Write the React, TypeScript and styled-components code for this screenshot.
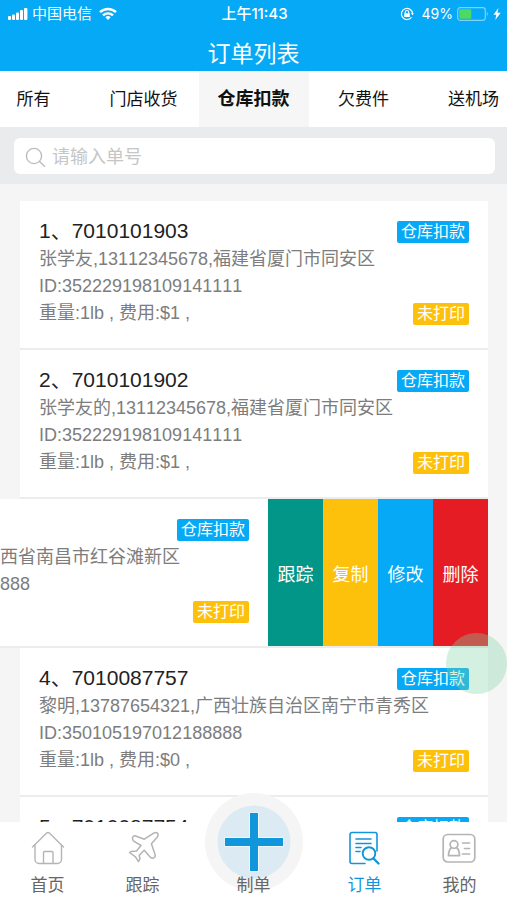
import React from "react";
import styled, { createGlobalStyle } from "styled-components";

const GlobalStyle = createGlobalStyle`
  *, *::before, *::after { box-sizing: border-box; }
  body {
    margin: 0;
    background: #f5f5f5;
    font-family: "Liberation Sans", "Noto Sans CJK SC", sans-serif;
    font-kerning: none;
  }
  button, input { font-family: inherit; }
  button { border: 0; padding: 0; background: none; cursor: pointer; }
`;

const Screen = styled.div`
  display: flex;
  flex-direction: column;
  height: 100vh;
  overflow: hidden;
`;

const Header = styled.header`
  flex: none;
  background: #05a9f5;
  color: #fff;
`;

const StatusBar = styled.div`
  display: grid;
  grid-template-columns: 1fr auto 1fr;
  align-items: center;
  height: 27px;
  padding: 0 6px 0 8px;
  font-family: Inter, "Noto Sans CJK SC", sans-serif;
  font-size: 14px;
`;

const StatusGroup = styled.div<{ $end?: boolean }>`
  display: flex;
  align-items: center;
  justify-content: ${(p) => (p.$end ? "flex-end" : "flex-start")};
  gap: 4px;
`;

const Carrier = styled.span`
  margin-right: 3px;
  font-size: 15px;
  line-height: 20px;
`;

const Percent = styled.span`
  margin-left: 4px;
`;

const Clock = styled.time`
  font-weight: 500;
  font-size: 15px;
  line-height: 20px;
`;

const Title = styled.h1`
  margin: 0;
  padding: 10px 0 0;
  font-size: 23px;
  line-height: 34px;
  font-weight: 400;
  text-align: center;
`;

const Tabs = styled.nav`
  flex: none;
  display: flex;
  justify-content: center;
  height: 56px;
  background: #fff;
  overflow: hidden;
`;

const Tab = styled.button<{ $active?: boolean }>`
  flex: none;
  width: 110px;
  padding-bottom: 4px;
  color: #111;
  background: ${(p) => (p.$active ? "#f6f6f6" : "#fff")};
  font-size: ${(p) => (p.$active ? 18 : 17)}px;
  font-weight: ${(p) => (p.$active ? 700 : 400)};
`;

const SearchArea = styled.div`
  flex: none;
  padding: 11px 12px 10px 14px;
  background: #eaebed;
`;

const SearchBox = styled.label`
  display: flex;
  align-items: center;
  gap: 6px;
  height: 36px;
  padding: 2px 11px 0;
  border-radius: 6px;
  background: #fff;
`;

const SearchInput = styled.input`
  flex: 1;
  min-width: 0;
  padding: 0;
  border: 0;
  outline: 0;
  background: transparent;
  font-size: 18px;
  &::placeholder { color: #c6c6c6; opacity: 1; }
`;

const List = styled.ul`
  flex: 1;
  min-height: 0;
  margin: 0;
  padding: 17px 19px 0 20px;
  list-style: none;
  overflow: hidden;
`;

const Row = styled.li<{ $swiped?: boolean }>`
  display: flex;
  height: 149px;
  margin-left: ${(p) => (p.$swiped ? -20 : 0)}px;
  background: #fff;
  border-bottom: 2px solid #ececec;
`;

const Order = styled.article<{ $swiped?: boolean }>`
  flex: 1;
  min-width: 0;
  display: grid;
  grid-template-columns: 1fr auto;
  grid-template-rows: 28px 27px 27px 27px;
  padding: 17px 19px 0 ${(p) => (p.$swiped ? 0 : 19)}px;
  color: #7d7d7d;
  font-size: 18px;
  white-space: nowrap;
  overflow: hidden;
`;

const Number = styled.h2`
  margin: 0;
  color: #222;
  font-size: 21px;
  line-height: 25px;
  font-weight: 400;
`;

const Line = styled.p<{ $wide?: boolean }>`
  margin: 0;
  grid-column: ${(p) => (p.$wide ? "1 / -1" : "1")};
  line-height: 27px;
`;

const Badge = styled.span<{ $tone: string }>`
  grid-column: 2;
  justify-self: end;
  align-self: center;
  height: 22px;
  padding: 0 4px;
  border-radius: 2px;
  background: ${(p) => p.$tone};
  color: #fff;
  font-size: 16px;
  line-height: 22px;
`;

const Actions = styled.div`
  flex: none;
  display: flex;
`;

const Action = styled.button<{ $tone: string }>`
  width: 55px;
  background: ${(p) => p.$tone};
  color: #fff;
  font-size: 18px;
`;

const TouchDot = styled.div`
  position: fixed;
  right: 0;
  bottom: 206px;
  width: 61px;
  height: 61px;
  border-radius: 50%;
  background: rgba(129, 211, 167, 0.35);
  pointer-events: none;
`;

const BottomBar = styled.nav`
  flex: none;
  display: grid;
  grid-template-columns: 3fr 3fr 4fr 3fr 3fr;
  height: 78px;
  background: #fff;
`;

const BarLink = styled.a<{ $active?: boolean }>`
  position: relative;
  display: flex;
  flex-direction: column;
  align-items: center;
  justify-content: flex-end;
  gap: 8px;
  padding-bottom: 1px;
  color: ${(p) => (p.$active ? "#1296db" : "#666")};
  font-size: 17px;
  line-height: 26px;
  text-decoration: none;
`;

const BarLabel = styled.span`
  position: relative;
`;

const CreateIcon = styled.svg`
  position: absolute;
  top: -29px;
  left: 50%;
  margin-left: -49px;
`;

const blue = "#05a9f5";
const amber = "#fec10b";

const SignalIcon = () => (
  <svg width="20" height="14" viewBox="0 0 20 14" fill="#fff" aria-hidden="true">
    <rect x="0" y="9" width="3" height="4" rx="1" />
    <rect x="4" y="7.5" width="3" height="5.5" rx="1" />
    <rect x="8" y="5.5" width="3" height="7.5" rx="1" />
    <rect x="12" y="3" width="3" height="10" rx="1" />
    <rect x="16" y="1" width="3.4" height="12" rx="1" />
  </svg>
);

const WifiIcon = () => (
  <svg width="18" height="14" viewBox="0 0 18 14" fill="none" stroke="#fff" strokeWidth="2.4" aria-hidden="true">
    <path d="M1 5.2a11.5 11.5 0 0 1 16 0" />
    <path d="M4 8.4a7.2 7.2 0 0 1 10 0" />
    <path d="M9 13 6.3 10.3a3.9 3.9 0 0 1 5.4 0z" fill="#fff" stroke="none" />
  </svg>
);

const LockIcon = () => (
  <svg width="14" height="14" viewBox="0 0 14 14" fill="none" stroke="#fff" strokeWidth="1.2" aria-hidden="true">
    <path d="M11.5 10.3A5.6 5.6 0 1 1 12.6 6.5" />
    <path d="m10.8 6.2 1.8 2 1.3-2z" fill="#fff" stroke="none" />
    <rect x="4.2" y="6.2" width="5.6" height="3.9" rx=".5" fill="#fff" stroke="none" />
    <path d="M5.3 6.5V5.2a1.7 1.7 0 0 1 3.4 0v1.3" />
  </svg>
);

const BatteryIcon = () => (
  <svg width="32" height="14" viewBox="0 0 32 14" aria-hidden="true">
    <rect x=".7" y=".7" width="27.6" height="12.6" rx="2.5" fill="none" stroke="#7fd2fa" strokeWidth="1.2" />
    <rect x="2.3" y="2.3" width="12" height="9.4" rx="1" fill="#4cd964" />
    <path d="M29.8 4.8q2 2.2 0 4.4z" fill="#7fd2fa" />
  </svg>
);

const BoltIcon = () => (
  <svg width="8" height="12" viewBox="0 0 8 12" fill="#fff" aria-hidden="true">
    <path d="M5.4 0 .5 6.7h2.8L2.3 12 7.7 4.8H4.5z" />
  </svg>
);

const SearchIcon = () => (
  <svg width="21" height="20" viewBox="0 0 21 20" fill="none" stroke="#bcbcbc" strokeWidth="1.4" strokeLinecap="round" aria-hidden="true">
    <circle cx="9" cy="9" r="7.6" />
    <path d="m14.5 14.5 5 4.7" />
  </svg>
);

const HomeIcon = () => (
  <svg width="34" height="34" viewBox="0 0 34 34" fill="none" stroke="#b5b5b5" strokeWidth="1.4" strokeLinejoin="round" strokeLinecap="round" aria-hidden="true">
    <path d="M1.5 16 15.4 2.2q1.6-1.4 3.2 0L32.5 16" />
    <path d="M4 14v14.5a4 4 0 0 0 4 4h18.5a4 4 0 0 0 4-4V14" />
    <path d="M12.5 32.5V21.5a1 1 0 0 1 1-1h7.5a1 1 0 0 1 1 1v11" />
  </svg>
);

const PlaneIcon = () => (
  <svg width="32" height="34" viewBox="0 0 32 34" fill="none" stroke="#b3b3b3" strokeWidth="1.5" strokeLinejoin="round" aria-hidden="true">
    <path d="M8 4.8 17.3 8.2 26.3 2.3Q29 .8 30.6 2.2Q31.7 3.800 30.2 6.2L24.4 12.7 28.3 24.2Q28.5 26.3 26.5 27Q24.2 27.6 22.9 25.8L17.2 19.2 12.2 24.2 12.9 28 11.5 30.6 8.5 25.8 2.5 21.5 4 20.5 9.5 20 14 14.5 7 10.3Q5 8.7 5.7 6.3Q6.5 4.5 8 4.8Z" />
  </svg>
);

const OrderIcon = () => (
  <svg width="32" height="34" viewBox="0 0 32 34" fill="none" stroke="#1296db" strokeWidth="1.6" strokeLinecap="round" aria-hidden="true">
    <path d="M17 32.5H4a2 2 0 0 1-2-2V3.5a2 2 0 0 1 2-2h23a2 2 0 0 1 2 2V20" strokeLinejoin="round" />
    <path d="M8 8h15M8 12.5h15M8 16.5h5M8 20.5h4" />
    <circle cx="21" cy="22.5" r="6.3" strokeWidth="1.9" />
    <path d="m25.5 27.5 5 5" strokeWidth="2.4" />
  </svg>
);

const ProfileIcon = () => (
  <svg width="34" height="34" viewBox="0 0 34 34" fill="none" stroke="#b5b5b5" strokeWidth="1.7" strokeLinecap="round" strokeLinejoin="round" aria-hidden="true">
    <rect x="1.2" y="3.5" width="31.6" height="27.5" rx="4.5" />
    <circle cx="12" cy="13.5" r="3.9" />
    <path d="M9.5 16.5Q6.5 19 6.5 24.7H17.5Q17.5 19 14.5 16.5" />
    <path d="M20.5 12h7M22.5 17.5h5M20.5 23h7" />
  </svg>
);

const Warehouse = () => <Badge $tone={blue}>仓库扣款</Badge>;
const Unprinted = () => <Badge $tone={amber}>未打印</Badge>;

type OrderData = { title: string; contact?: string; id?: string; fee?: string };

const OrderRow = ({ title, contact, id, fee }: OrderData) => (
  <Row>
    <Order>
      <Number>{title}</Number>
      <Warehouse />
      <Line $wide>{contact}</Line>
      <Line $wide>{id}</Line>
      <Line>{fee}</Line>
      {fee && <Unprinted />}
    </Order>
  </Row>
);

const firstOrders: OrderData[] = [
  { title: "1、7010101903", contact: "张学友,13112345678,福建省厦门市同安区", id: "ID:352229198109141111", fee: "重量:1lb , 费用:$1 ," },
  { title: "2、7010101902", contact: "张学友的,13112345678,福建省厦门市同安区", id: "ID:352229198109141111", fee: "重量:1lb , 费用:$1 ," },
];

const lastOrders: OrderData[] = [
  { title: "4、7010087757", contact: "黎明,13787654321,广西壮族自治区南宁市青秀区", id: "ID:350105197012188888", fee: "重量:1lb , 费用:$0 ," },
  { title: "5、7010087754" },
];

const actions = [
  { label: "跟踪", tone: "#029688" },
  { label: "复制", tone: amber },
  { label: "修改", tone: blue },
  { label: "删除", tone: "#e51c23" },
];

const tabs = ["所有", "门店收货", "仓库扣款", "欠费件", "送机场"];

export default function App() {
  return (
    <Screen>
      <GlobalStyle />
      <Header>
        <StatusBar>
          <StatusGroup>
            <SignalIcon />
            <Carrier>中国电信</Carrier>
            <WifiIcon />
          </StatusGroup>
          <Clock>上午11:43</Clock>
          <StatusGroup $end>
            <LockIcon />
            <Percent>49%</Percent>
            <BatteryIcon />
            <BoltIcon />
          </StatusGroup>
        </StatusBar>
        <Title>订单列表</Title>
      </Header>

      <Tabs>
        {tabs.map((name) => (
          <Tab key={name} $active={name === "仓库扣款"}>{name}</Tab>
        ))}
      </Tabs>

      <SearchArea>
        <SearchBox>
          <SearchIcon />
          <SearchInput type="search" placeholder="请输入单号" aria-label="请输入单号" />
        </SearchBox>
      </SearchArea>

      <List>
        {firstOrders.map((order) => <OrderRow key={order.title} {...order} />)}
        <Row $swiped>
          <Order $swiped>
            <Warehouse />
            <Line $wide>西省南昌市红谷滩新区</Line>
            <Line $wide>888</Line>
            <Unprinted />
          </Order>
          <Actions>
            {actions.map(({ label, tone }) => <Action key={label} $tone={tone}>{label}</Action>)}
          </Actions>
        </Row>
        {lastOrders.map((order) => <OrderRow key={order.title} {...order} />)}
      </List>

      <BottomBar>
        <BarLink href="#home"><HomeIcon /><BarLabel>首页</BarLabel></BarLink>
        <BarLink href="#track"><PlaneIcon /><BarLabel>跟踪</BarLabel></BarLink>
        <BarLink href="#create">
          <CreateIcon width="98" height="98" viewBox="0 0 98 98" aria-hidden="true">
            <circle cx="49" cy="49" r="49" fill="#f5f5f5" />
            <circle cx="49" cy="49" r="36.5" fill="#dcebf3" />
            <path d="M49 19.5v59M19.5 49h59" stroke="#eef9ff" strokeWidth="10" />
            <path d="M49 20v58M20 49h58" stroke="#1296db" strokeWidth="8" />
          </CreateIcon>
          <BarLabel>制单</BarLabel>
        </BarLink>
        <BarLink href="#orders" $active><OrderIcon /><BarLabel>订单</BarLabel></BarLink>
        <BarLink href="#profile"><ProfileIcon /><BarLabel>我的</BarLabel></BarLink>
      </BottomBar>
      <TouchDot />
    </Screen>
  );
}
